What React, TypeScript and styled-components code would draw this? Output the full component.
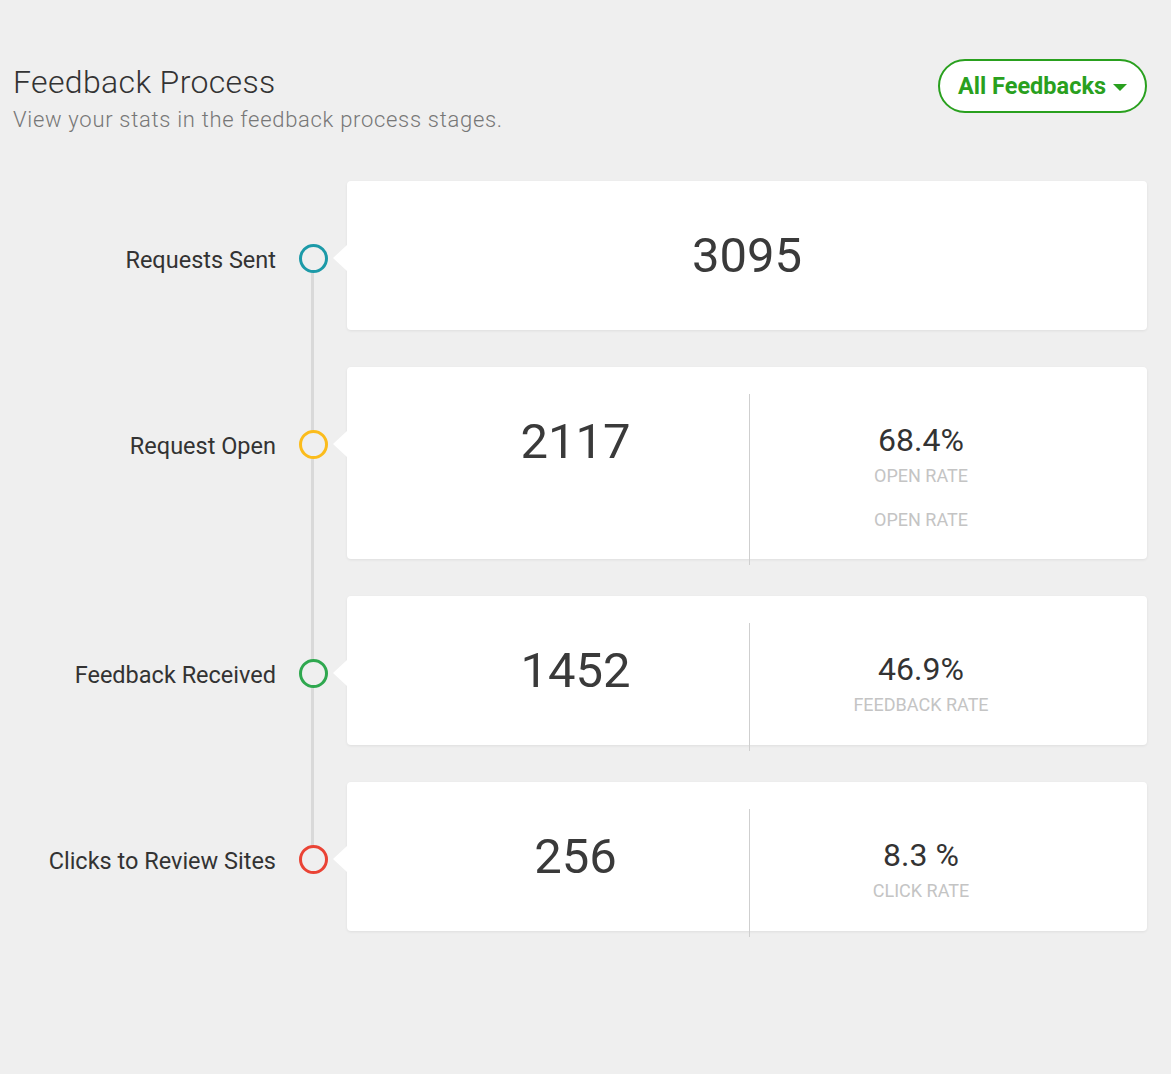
import React from 'react';
import styled, { createGlobalStyle } from 'styled-components';

interface Rate {
  value: string;
  labels: string[];
}

interface Stage {
  key: string;
  label: string;
  color: string;
  total: string;
  rate?: Rate;
}

const STAGES: Stage[] = [
  { key: 'sent', label: 'Requests Sent', color: '#1c9aa8', total: '3095' },
  {
    key: 'open',
    label: 'Request Open',
    color: '#fbbc1c',
    total: '2117',
    rate: { value: '68.4%', labels: ['Open Rate', 'Open Rate'] },
  },
  {
    key: 'received',
    label: 'Feedback Received',
    color: '#2fa84f',
    total: '1452',
    rate: { value: '46.9%', labels: ['Feedback Rate'] },
  },
  {
    key: 'clicks',
    label: 'Clicks to Review Sites',
    color: '#ea4335',
    total: '256',
    rate: { value: '8.3 %', labels: ['Click Rate'] },
  },
];

const GlobalStyle = createGlobalStyle`
  html, body {
    margin: 0;
    padding: 0;
    background: #efefef;
  }
  body {
    font-family: Roboto, "Liberation Sans", Arial, sans-serif;
    color: #333;
  }
`;

const Page = styled.div`
  min-height: 1074px;
  box-sizing: border-box;
  padding: 59px 24px 0 13px;
`;

const Header = styled.header`
  display: flex;
  justify-content: space-between;
  align-items: flex-start;
`;

const TitleBlock = styled.div`
  padding-top: 4px;
`;

const Title = styled.h1`
  margin: 0;
  font-size: 32px;
  line-height: 38px;
  font-weight: 300;
  letter-spacing: 0.35px;
  color: #333;
`;

const Subtitle = styled.p`
  margin: 5px 0 0;
  font-size: 22px;
  line-height: 28px;
  font-weight: 300;
  letter-spacing: 0.7px;
  color: #777;
`;

const FilterButton = styled.button`
  display: flex;
  align-items: center;
  gap: 7px;
  height: 54px;
  box-sizing: border-box;
  padding: 0 18px;
  border: 2px solid #29a01e;
  border-radius: 27px;
  background: #fff;
  color: #29a01e;
  font-family: Roboto, "Liberation Sans", Arial, sans-serif;
  font-size: 23.5px;
  font-weight: 700;
  cursor: pointer;
`;

const Caret = styled.span`
  width: 0;
  height: 0;
  margin-top: 3px;
  border-left: 7px solid transparent;
  border-right: 7px solid transparent;
  border-top: 7px solid #29a01e;
`;

const Timeline = styled.div`
  display: flex;
  flex-direction: column;
  gap: 37px;
  margin-top: 47px;
`;

const Row = styled.div`
  display: grid;
  grid-template-columns: 263px 71px 1fr;
`;

const StageLabel = styled.div`
  padding-top: 65px;
  text-align: right;
  font-size: 23.5px;
  line-height: 28px;
  color: #333;
`;

const Marker = styled.div<{ $last: boolean }>`
  position: relative;
  padding: 63px 0 0 23px;

  &::before {
    content: '';
    display: ${(p) => (p.$last ? 'none' : 'block')};
    position: absolute;
    left: 35px;
    top: 77px;
    width: 3px;
    height: calc(100% + 37px);
    background: #d9d9d9;
  }
`;

const Dot = styled.span<{ $color: string }>`
  position: relative;
  z-index: 1;
  display: block;
  width: 29px;
  height: 29px;
  box-sizing: border-box;
  border: 3px solid ${(p) => p.$color};
  border-radius: 50%;
  background: #efefef;
`;

const Card = styled.div<{ $split: boolean }>`
  position: relative;
  display: grid;
  grid-template-columns: ${(p) => (p.$split ? '347px 1fr' : '1fr')};
  padding: 27px 55px 0;
  background: #fff;
  border-radius: 4px;
  box-shadow: 0 1px 3px rgba(0, 0, 0, 0.07);

  &::before {
    content: '';
    position: absolute;
    left: -14px;
    top: 64px;
    width: 0;
    height: 0;
    border-top: 13px solid transparent;
    border-bottom: 13px solid transparent;
    border-right: 14px solid #fff;
  }
`;

const TotalCol = styled.div`
  min-height: 128px;
  margin-bottom: -6px;
  padding-top: 18px;
  box-sizing: border-box;
  text-align: center;
`;

const Total = styled.div`
  font-size: 49px;
  line-height: 60px;
  color: #3a3a3a;
`;

const RateCol = styled.div`
  min-height: 128px;
  margin-bottom: -6px;
  padding: 27px 0 34px;
  box-sizing: border-box;
  border-left: 1px solid #cfcfcf;
  text-align: center;
`;

const RateValue = styled.div`
  font-size: 32px;
  line-height: 38px;
  color: #333;
`;

const RateLabel = styled.div<{ $first: boolean }>`
  margin-top: ${(p) => (p.$first ? '6px' : '22px')};
  font-size: 18px;
  line-height: 22px;
  text-transform: uppercase;
  color: #c4c4c4;
`;

const App = () => {
  return (
    <>
      <GlobalStyle />
      <Page>
        <Header>
          <TitleBlock>
            <Title>Feedback Process</Title>
            <Subtitle>View your stats in the feedback process stages.</Subtitle>
          </TitleBlock>
          <FilterButton>
            All Feedbacks
            <Caret />
          </FilterButton>
        </Header>

        <Timeline>
          {STAGES.map((stage, i) => (
            <Row key={stage.key}>
              <StageLabel>{stage.label}</StageLabel>
              <Marker $last={i === STAGES.length - 1}>
                <Dot $color={stage.color} />
              </Marker>
              <Card $split={!!stage.rate}>
                <TotalCol>
                  <Total>{stage.total}</Total>
                </TotalCol>
                {stage.rate && (
                  <RateCol>
                    <RateValue>{stage.rate.value}</RateValue>
                    {stage.rate.labels.map((label, j) => (
                      <RateLabel key={j} $first={j === 0}>
                        {label}
                      </RateLabel>
                    ))}
                  </RateCol>
                )}
              </Card>
            </Row>
          ))}
        </Timeline>
      </Page>
    </>
  );
};

export default App;
